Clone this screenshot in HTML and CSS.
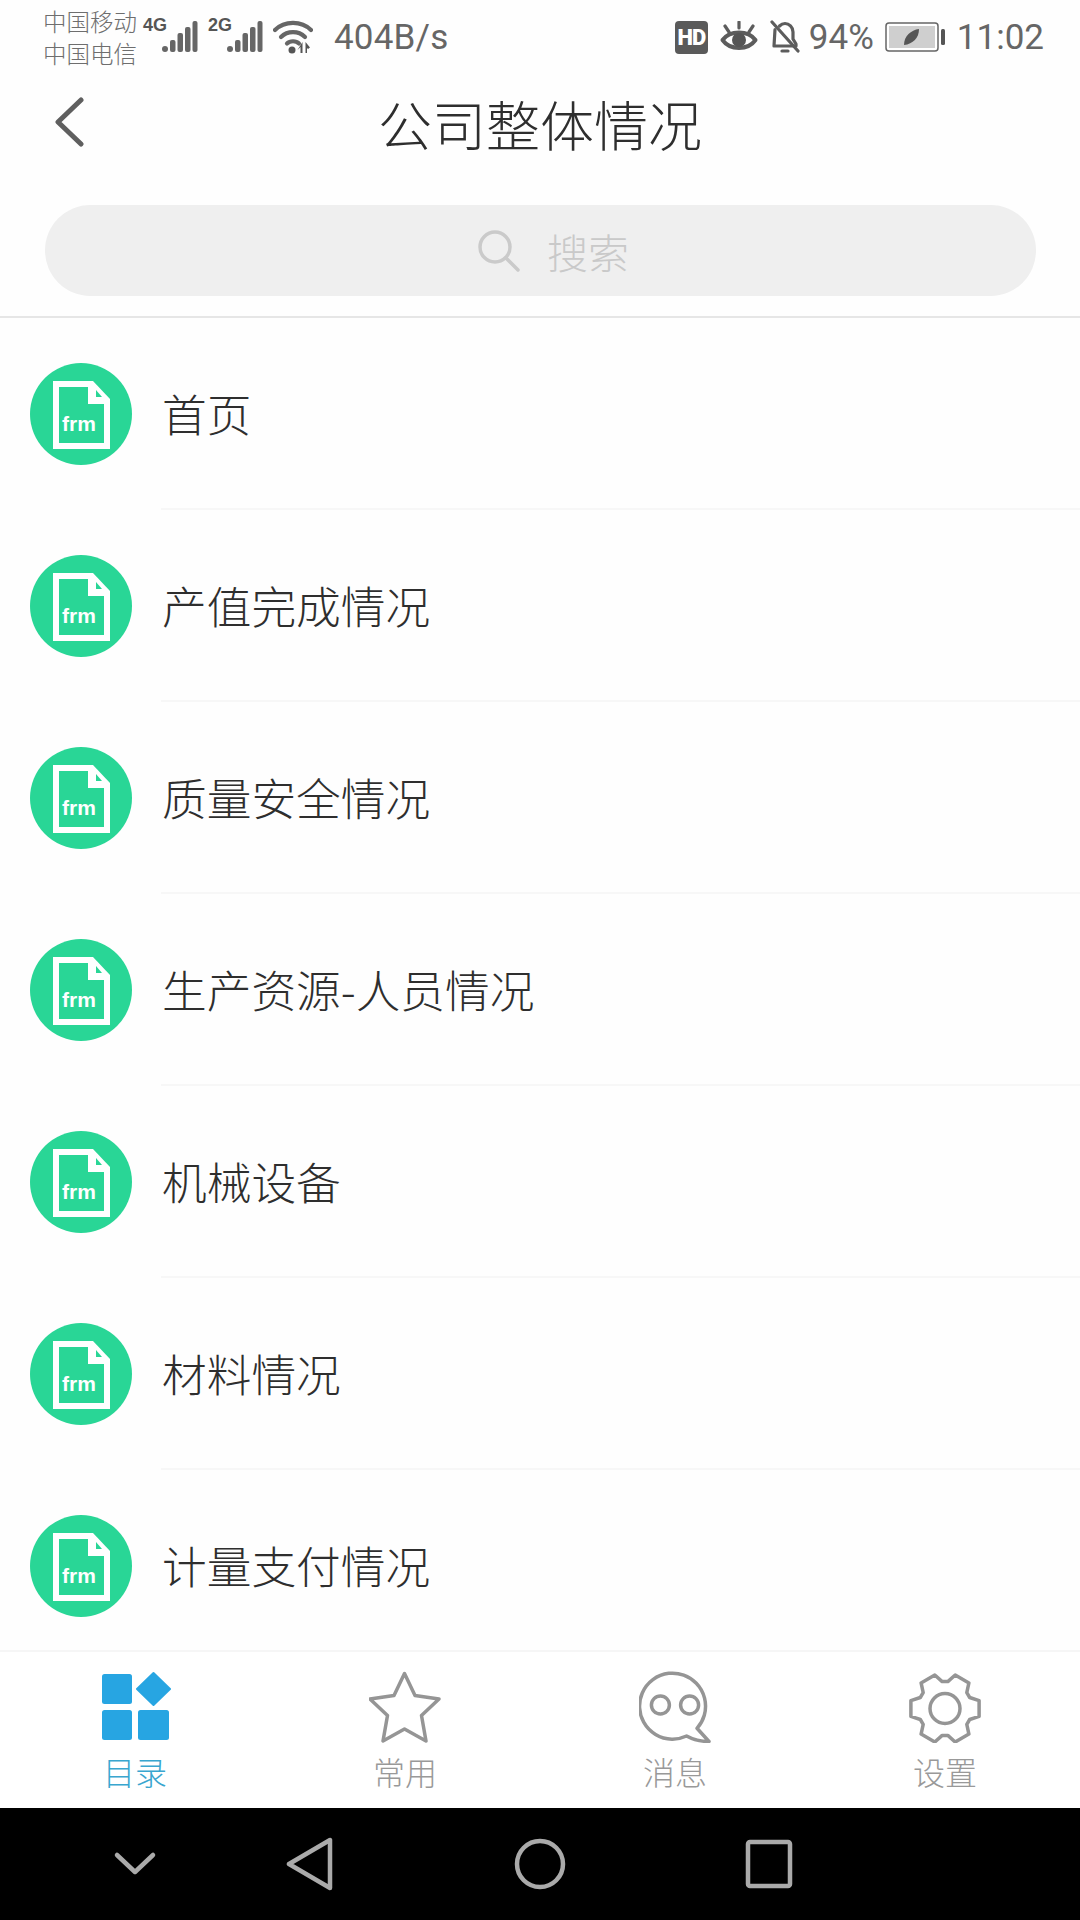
FILE: index.html
```html
<!DOCTYPE html>
<html lang="zh-CN">
<head>
<meta charset="utf-8">
<title>公司整体情况</title>
<link rel="stylesheet" href="styles.css">
</head>
<body>
<div class="page">
  <div class="status">
    <div class="carrier"><span>中国移动</span><span>中国电信</span></div>
    <span class="net net-first">4G</span>
    <svg class="sig" viewBox="0 0 36 34"><circle cx="3" cy="29" r="3"/><rect x="8" y="20" width="5.500" height="12" rx="2"/><rect x="15.500" y="13" width="5.500" height="19" rx="2"/><rect x="23" y="7" width="5.500" height="25" rx="2"/><rect x="30.500" y="1" width="5" height="31" rx="2"/></svg>
    <span class="net">2G</span>
    <svg class="sig" viewBox="0 0 36 34"><circle cx="3" cy="29" r="3"/><rect x="8" y="20" width="5.500" height="12" rx="2"/><rect x="15.500" y="13" width="5.500" height="19" rx="2"/><rect x="23" y="7" width="5.500" height="25" rx="2"/><rect x="30.500" y="1" width="5" height="31" rx="2"/></svg>
    <svg class="wifi" viewBox="0 0 40 34"><path class="wifi-arc" d="M2 10C11.500 0.500 28.500 0.500 38 10"/><path class="wifi-arc" d="M8 17C14.500 10.500 25.500 10.500 32 17"/><path class="wifi-arc" d="M14 23.500C17 20.500 23 20.500 26 23.500"/><circle class="wifi-dot" cx="19" cy="30" r="3.500"/><path class="wifi-dot" d="M29.500 22v11h-2v-6l-3 3zM32.500 22l4.500 5.500-2 1.500-1-1v5h-1.500z"/></svg>
    <span class="speed">404B/s</span>
    <div class="status-right">
      <span class="hd">HD</span>
      <svg class="eye" viewBox="0 0 38 32"><path class="st st-eye" d="M2.500 19C10 9 28 9 35.500 19C28 29.500 10 29.500 2.500 19Z"/><circle class="wifi-dot" cx="19" cy="19" r="7"/><path class="st" d="M19 1v6M5 5l4 6M33 5l-4 6"/></svg>
      <svg class="bell" viewBox="0 0 30 34"><path class="st" d="M5 9.500L4 26H26V24L23 19V12C23 7 19 3.500 15 3.500C13 3.500 11 4.500 9.500 6"/><path class="st" d="M2 2L28 31"/><path class="st" d="M12 31h6"/></svg>
      <span class="stat-text">94%</span>
      <svg class="batt" viewBox="0 0 61 30"><rect class="batt-box" x="1" y="1" width="52" height="28" rx="3"/><rect class="batt-fill" x="4" y="4" width="46" height="22"/><path class="wifi-dot" d="M19 23C19 14 26 8 34 7C34 16 28 22 19 23Z"/><rect class="wifi-dot" x="56" y="7" width="4" height="16" rx="1.500"/></svg>
      <span class="stat-text">11:02</span>
    </div>
  </div>

  <div class="header">
    <svg class="back" viewBox="0 0 30 50"><path d="M27 3L4 25L27 47"/></svg>
    <h1 class="title">公司整体情况</h1>
  </div>

  <div class="search-wrap">
    <div class="search">
      <svg class="search-icon" viewBox="0 0 42 42"><circle cx="17" cy="17" r="15"/><path d="M28 28L40 40"/></svg>
      <span class="search-text">搜索</span>
    </div>
  </div>

  <div class="list">
    <div class="row">
      <svg class="frm" viewBox="0 0 102 102"><circle class="frm-bg" cx="51" cy="51" r="51"/><path class="frm-line" d="M26 21H60L77 39V83H26Z"/><path class="frm-fold" d="M58 18H63L80 36V41H58Z"/><path class="frm-bg" d="M66 27L72 34H66Z"/><text class="frm-text" x="49" y="68">frm</text></svg>
      <div class="row-body"><span class="row-text">首页</span></div>
    </div>
    <div class="row">
      <svg class="frm" viewBox="0 0 102 102"><circle class="frm-bg" cx="51" cy="51" r="51"/><path class="frm-line" d="M26 21H60L77 39V83H26Z"/><path class="frm-fold" d="M58 18H63L80 36V41H58Z"/><path class="frm-bg" d="M66 27L72 34H66Z"/><text class="frm-text" x="49" y="68">frm</text></svg>
      <div class="row-body"><span class="row-text">产值完成情况</span></div>
    </div>
    <div class="row">
      <svg class="frm" viewBox="0 0 102 102"><circle class="frm-bg" cx="51" cy="51" r="51"/><path class="frm-line" d="M26 21H60L77 39V83H26Z"/><path class="frm-fold" d="M58 18H63L80 36V41H58Z"/><path class="frm-bg" d="M66 27L72 34H66Z"/><text class="frm-text" x="49" y="68">frm</text></svg>
      <div class="row-body"><span class="row-text">质量安全情况</span></div>
    </div>
    <div class="row">
      <svg class="frm" viewBox="0 0 102 102"><circle class="frm-bg" cx="51" cy="51" r="51"/><path class="frm-line" d="M26 21H60L77 39V83H26Z"/><path class="frm-fold" d="M58 18H63L80 36V41H58Z"/><path class="frm-bg" d="M66 27L72 34H66Z"/><text class="frm-text" x="49" y="68">frm</text></svg>
      <div class="row-body"><span class="row-text">生产资源-人员情况</span></div>
    </div>
    <div class="row">
      <svg class="frm" viewBox="0 0 102 102"><circle class="frm-bg" cx="51" cy="51" r="51"/><path class="frm-line" d="M26 21H60L77 39V83H26Z"/><path class="frm-fold" d="M58 18H63L80 36V41H58Z"/><path class="frm-bg" d="M66 27L72 34H66Z"/><text class="frm-text" x="49" y="68">frm</text></svg>
      <div class="row-body"><span class="row-text">机械设备</span></div>
    </div>
    <div class="row">
      <svg class="frm" viewBox="0 0 102 102"><circle class="frm-bg" cx="51" cy="51" r="51"/><path class="frm-line" d="M26 21H60L77 39V83H26Z"/><path class="frm-fold" d="M58 18H63L80 36V41H58Z"/><path class="frm-bg" d="M66 27L72 34H66Z"/><text class="frm-text" x="49" y="68">frm</text></svg>
      <div class="row-body"><span class="row-text">材料情况</span></div>
    </div>
    <div class="row">
      <svg class="frm" viewBox="0 0 102 102"><circle class="frm-bg" cx="51" cy="51" r="51"/><path class="frm-line" d="M26 21H60L77 39V83H26Z"/><path class="frm-fold" d="M58 18H63L80 36V41H58Z"/><path class="frm-bg" d="M66 27L72 34H66Z"/><text class="frm-text" x="49" y="68">frm</text></svg>
      <div class="row-body"><span class="row-text">计量支付情况</span></div>
    </div>
  </div>

  <div class="tabs">
    <div class="tab tab-active">
      <svg class="tab-icon" viewBox="0 0 72 72"><rect class="cat" x="3" y="3" width="30" height="30" rx="2.500"/><rect class="cat" x="3" y="39" width="30" height="30" rx="2.500"/><rect class="cat" x="39" y="39" width="31" height="30" rx="2.500"/><path class="cat cat-d" d="M54.500 2L71 18L54.500 34L38 18Z"/></svg>
      <span class="tab-label">目录</span>
    </div>
    <div class="tab">
      <svg class="tab-icon" viewBox="0 0 72 72"><path class="tab-line" d="M35.500 2.500L46 24.500L70 28L52.500 44.500L57 70L35.500 58L14 70L18.500 44.500L1 28L25 24.500Z"/></svg>
      <span class="tab-label">常用</span>
    </div>
    <div class="tab">
      <svg class="tab-icon" viewBox="0 0 72 72"><path class="tab-line" d="M47.600 65A33 33 0 1 1 58 57.300L70 70.500C62 70.500 54 68.500 47.600 65Z"/><circle class="tab-line" cx="21.400" cy="34" r="9"/><circle class="tab-line" cx="50.600" cy="34" r="9"/></svg>
      <span class="tab-label">消息</span>
    </div>
    <div class="tab">
      <svg class="tab-icon" viewBox="0 -1.500 72 72"><path class="tab-line" d="M60.700 25L70.100 28.100V43.900L60.700 47L57.800 51.900L59.900 61.600L46.200 69.500L38.800 62.900H33.200L25.800 69.500L12.100 61.600L14.200 51.900L11.300 47L1.900 43.900V28.100L11.300 25L14.200 20.100L12.100 10.400L25.800 2.500L33.200 9.100H38.800L46.200 2.500L59.900 10.400L57.800 20.100Z"/><circle class="tab-line" cx="36" cy="36" r="15"/></svg>
      <span class="tab-label">设置</span>
    </div>
  </div>

  <div class="nav">
    <svg class="nav-icon" viewBox="0 0 54 54"><path d="M9 18L27 35L45 18"/></svg>
    <svg class="nav-icon" viewBox="0 0 54 54"><path d="M48 3V51L7 27Z"/></svg>
    <svg class="nav-icon" viewBox="0 0 54 54"><circle cx="27" cy="27" r="23"/></svg>
    <svg class="nav-icon" viewBox="0 0 54 54"><rect x="6" y="5" width="42" height="44" rx="2"/></svg>
  </div>
</div>
</body>
</html>
```

FILE: styles.css
```css
* { box-sizing: border-box; }

html, body {
  margin: 0;
  padding: 0;
  background: #fff;
}

body {
  font-family: "Noto Sans CJK SC", "Noto Sans", Roboto, sans-serif;
}

.page {
  width: 1080px;
  height: 1920px;
  display: flex;
  flex-direction: column;
  overflow: hidden;
  background: #fefefe;
}

/* status bar */
.status {
  flex: none;
  height: 74px;
  display: flex;
  align-items: center;
  padding: 0 36px 0 44px;
  color: #666;
}

.carrier {
  display: flex;
  flex-direction: column;
  font-size: 23.500px;
  font-weight: 300;
  line-height: 32px;
  width: 99px;
  margin-top: -1px;
  margin-left: -1px;
  margin-right: 1px;
  color: #6e6e6e;
}

.net {
  align-self: flex-start;
  margin-top: 15px;
  width: 19px;
  font-family: "Liberation Sans Narrow", "Liberation Sans", sans-serif;
  font-weight: 700;
  font-size: 18px;
  line-height: 20px;
  color: #555;
}

.sig {
  width: 36px;
  height: 34px;
  fill: #666;
  margin-right: 10px;
}

.wifi {
  width: 40px;
  height: 34px;
}

.wifi-arc {
  fill: none;
  stroke: #666;
  stroke-width: 4.200px;
  stroke-linecap: round;
}

.wifi-dot { fill: #555; }

.st {
  fill: none;
  stroke: #5c5c5c;
  stroke-width: 3.200px;
  stroke-linecap: round;
  stroke-linejoin: round;
}

.st-eye { stroke-width: 4px; }

.speed {
  margin-left: 21px;
  font-family: Roboto, sans-serif;
  font-size: 35px;
  letter-spacing: 0.2px;
}

.status-right {
  margin-left: auto;
  display: flex;
  align-items: center;
}

.hd {
  width: 33px;
  height: 33px;
  border-radius: 4px;
  background: #5a5a5a;
  color: #fff;
  font-family: Roboto, sans-serif;
  font-weight: 900;
  font-size: 22px;
  line-height: 33px;
  text-align: center;
  letter-spacing: -1px;
}

.eye {
  width: 38px;
  height: 32px;
  margin-left: 12px;
}

.bell {
  width: 30px;
  height: 34px;
  margin-left: 12px;
}

.stat-text {
  font-family: Roboto, sans-serif;
  font-size: 35px;
}

.bell + .stat-text { margin-left: 9px; }

.batt {
  width: 61px;
  height: 30px;
  margin: 0 11px;
}

.batt-box {
  fill: #fff;
  stroke: #666;
  stroke-width: 1.500px;
}

.batt-fill { fill: #cfcfcf; }

/* header */
.header {
  flex: none;
  height: 102px;
  display: grid;
  grid-template-columns: 1fr auto 1fr;
  align-items: center;
  padding-left: 54px;
}

.back {
  width: 30px;
  height: 50px;
  fill: none;
  stroke: #5f5f5f;
  stroke-width: 5px;
  stroke-linecap: round;
  stroke-linejoin: round;
  margin-top: -6px;
}

.title {
  margin: -2px 0 0 -54px;
  font-size: 54px;
  font-weight: 300;
  color: #2e2e2e;
  line-height: 70px;
  white-space: nowrap;
}

/* search */
.search-wrap {
  flex: none;
  height: 142px;
  padding: 29px 44px 20px 45px;
  border-bottom: 2px solid #e6e6e6;
}

.search {
  height: 91px;
  border-radius: 46px;
  background: #efefef;
  display: flex;
  align-items: center;
  justify-content: center;
  gap: 27px;
  padding-left: 26px;
}

.search-icon {
  width: 42px;
  height: 42px;
  fill: none;
  stroke: #cacaca;
  stroke-width: 3.500px;
  stroke-linecap: round;
}

.search-text {
  font-size: 41px;
  font-weight: 300;
  color: #c9c9c9;
  line-height: 60px;
}

/* list */
.list {
  flex: 1;
  min-height: 0;
  overflow: hidden;
}

.row {
  height: 192px;
  display: flex;
  align-items: center;
  padding-left: 30px;
}

.frm {
  flex: none;
  width: 102px;
  height: 102px;
  margin-right: 29px;
}

.frm-bg { fill: #29d696; }

.frm-line {
  fill: none;
  stroke: #fff;
  stroke-width: 6px;
}

.frm-fold { fill: #fff; }

.frm-text {
  font-family: "Liberation Sans Narrow", "Liberation Sans", sans-serif;
  font-weight: 700;
  font-size: 21px;
  fill: #fff;
  text-anchor: middle;
}

.row-body {
  flex: 1;
  height: 100%;
  display: flex;
  align-items: center;
  border-bottom: 2px solid #f7f7f7;
}

.row-text {
  font-size: 44.700px;
  font-weight: 300;
  color: #2e2e2e;
  line-height: 60px;
  margin-left: 1px;
}

/* tab bar */
.tabs {
  flex: none;
  height: 158px;
  display: grid;
  grid-template-columns: repeat(4, 1fr);
  border-top: 2px solid #f6f6f6;
  background: #fff;
}

.tab {
  display: flex;
  flex-direction: column;
  align-items: center;
  padding-top: 19px;
  color: #999;
}

.tab-active { color: #39a6cf; }

.tab-icon {
  width: 72px;
  height: 72px;
}

.tab-label {
  font-size: 32px;
  font-weight: 300;
  line-height: 44px;
  margin-top: 6px;
}

.cat { fill: #27a5e2; }

.cat-d {
  stroke: #27a5e2;
  stroke-width: 2px;
  stroke-linejoin: round;
}

.tab-line {
  fill: none;
  stroke: #959595;
  stroke-width: 3.500px;
  stroke-linejoin: round;
  stroke-linecap: round;
}

/* android nav */
.nav {
  flex: none;
  height: 112px;
  background: #000;
  display: grid;
  grid-template-columns: 270px 78px 384px 74px;
  align-items: center;
  justify-items: center;
}

.nav-icon {
  width: 54px;
  height: 54px;
  fill: none;
  stroke: #aaa;
  stroke-width: 4.500px;
  stroke-linecap: round;
  stroke-linejoin: round;
}
```
